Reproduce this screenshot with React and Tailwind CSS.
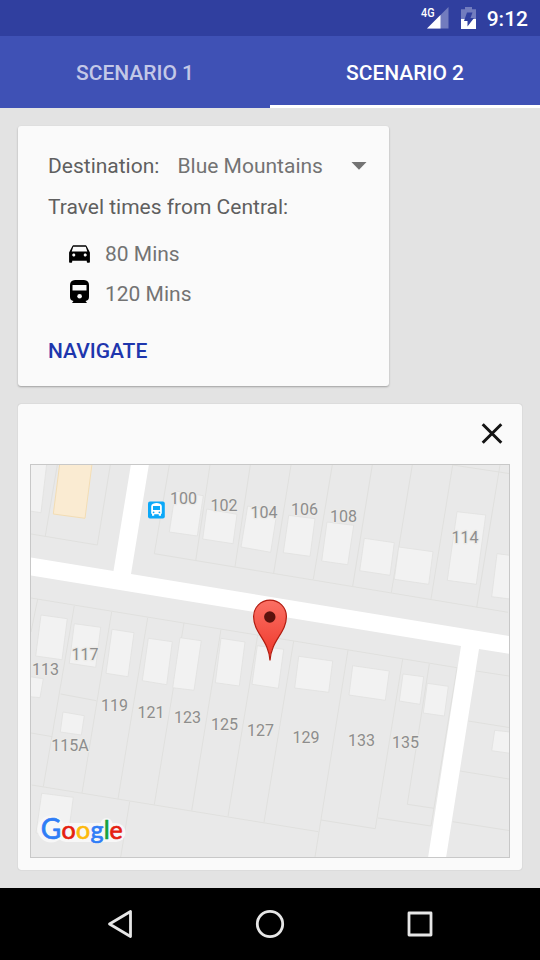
const PARCELS = [
  "M57.3 465 45.3 536M31 534 97.3 545 110.3 465M169.3 465 154.3 553.7 508 612.3",
  "M210 465 195.7 560.7M250.3 465 235 566.7M291 465 273.7 573M332.3 465 313.3 579.3M372.3 465 352.7 586M412.3 465 391.3 592.7M452.7 465 431 599M500 465 476.7 607.3M452.7 465 509 473.5",
  "M31 598 457 667.7 431 826 378 818M37.7 599 31 632M74.3 605.7 43.3 786.7M111.7 611.7 82 793M147.7 617.7 118 799M184 622.7 154.3 804.7M221 629.3 191.7 810.7M257.7 635 228 816.3M293.7 641 264 822.3M348 650 315 857M402.7 659 375.3 828.7 321 820",
  "M429.3 664 407.3 804.3 434 808.3M31.7 785 318.3 831.7M129.7 801.7 120.7 857M60.7 694 96.3 700.7M31 733 52.3 736.7",
  "M476 671 509 676M468.3 721 509 727.5M460 771 509 779M452.7 821.7 509 830.5",
];

const BUILDINGS = [
  "30,464 46.7,464 41,512.7 30,511",
  "175.5,491 203.3,495.7 197.3,536 169.3,532",
  "206.7,509 237,514.3 233,543.7 202.7,539",
  "247.7,506 277,511.7 270.7,552.3 241,547",
  "288.7,515.3 315,518.7 310,556.3 283.3,552.7",
  "327,522 353.7,525.3 347.7,564.7 321.7,561",
  "364.3,538.3 394.3,542.7 390,575.3 359.7,570.7",
  "398.7,547 433,551.7 428.7,584.3 394.3,579.3",
  "457,511.7 485.7,515 476.3,584.3 447.3,580.3",
  "497,553.7 510,555.3 510,599 491.7,596.7",
  "41,615 67.3,618.7 62,659.7 35.7,656",
  "74.3,623.7 100.7,627.3 95.7,667.3 69.3,663.3",
  "112,629.3 134,632.7 128,676.7 106,673.3",
  "148.3,638.3 172.3,641.7 166.7,684.7 142.3,680.7",
  "180,637.7 201.3,640.7 194,690.3 172.7,687.7",
  "63,712 84.3,715.7 81.3,735 60.3,732",
  "30,676.7 43.3,678.7 40,697.7 30,696.7",
  "221,638.3 245,642 239.3,686 215.3,682.7",
  "257.3,645.7 283.7,649.3 278.3,688.3 252,684.3",
  "298.7,656.3 332.7,661 328.7,692.3 294.7,688",
  "352.7,665.7 389.3,671 385.3,700.3 349,695",
  "403,674 423.7,676.7 420,704.3 399.3,701",
  "427.3,683.3 448.3,686.3 444.3,716 423.3,713",
  "494.7,730.3 510,732 510,753.3 491.7,750.7",
  "41.7,793.3 73.3,797.3 68,837 36,833",
];

const LABELS = [
  ["100", 183.5, 504],
  ["102", 224, 511],
  ["104", 264, 518],
  ["106", 304.5, 515],
  ["108", 343.5, 521.5],
  ["114", 465, 542.5],
  ["117", 85, 659.5],
  ["113", 45.5, 674.6],
  ["119", 114.5, 711.3],
  ["121", 151, 717.6],
  ["123", 187.5, 723.3],
  ["125", 224.5, 729.6],
  ["127", 260.5, 735.6],
  ["129", 306, 742.5],
  ["133", 361.5, 746.2],
  ["135", 405.5, 747.6],
  ["115A", 70, 751.2],
];

const BRAND = [
  { char: "G", x: 40.8, size: 28, color: "#2f7df6" },
  { char: "o", x: 61.6, size: 25, color: "#e5200e" },
  { char: "o", x: 75.9, size: 25, color: "#fdb90b" },
  { char: "g", x: 90.6, size: 25, color: "#2f7df6" },
  { char: "l", x: 103.8, size: 25, color: "#15a23d" },
  { char: "e", x: 109.6, size: 25, color: "#e5200e" },
];

function StatusBar() {
  return (
    <div className="flex h-9 items-center justify-end bg-[#303f9f] pr-3 text-white">
      <svg width="30" height="26" viewBox="420 5 30 26" className="mr-[11px]">
        <path d="M449.500 7V28.500H428z" fill="#fff" fillOpacity="0.32" />
        <path d="M441.500 15V28.500H428z" fill="#fff" />
        <text x="422" y="16.800" fontSize="12.500" fontWeight="500" fill="#fff" textLength="13.5" lengthAdjust="spacingAndGlyphs">4G</text>
      </svg>
      <svg width="16" height="24" viewBox="460 6 16 24" className="mr-[11px]">
        <path d="M465 7h7v2.200h4V19h-15V9.200h4z" fill="#fff" fillOpacity="0.32" />
        <path d="M461 19h15v10h-15z" fill="#fff" />
        <path d="M467 12.500h5.500l-2 5.500h3.500l-6.500 8.500v-5.500h-3.500z" fill="#303f9f" />
      </svg>
      <span className="pt-[1px] text-[21px] font-medium leading-9">9:12</span>
    </div>
  );
}

function Tabs() {
  return (
    <div className="flex h-[72px] bg-[#3f51b5] text-[21px] font-medium">
      <div className="flex flex-1 items-center justify-center pt-[4px] text-white/70">
        <span>SCENARIO 1</span>
      </div>
      <div className="flex flex-1 items-center justify-center border-b-[3px] border-white pt-[7px] text-white">
        <span>SCENARIO 2</span>
      </div>
    </div>
  );
}

function TripCard() {
  return (
    <div className="h-[260px] w-[371px] rounded-[3px] bg-[#fafafa] pl-[30px] text-[21px] text-[#737373] shadow-[0_1px_2px_rgba(0,0,0,0.3)]">
      <div className="flex h-[61px] items-end">
        <span className="w-[129.500px] text-[#5f5f5f] leading-[42px]">Destination:</span>
        <span className="w-[173px] leading-[42px]">Blue Mountains</span>
        <svg width="16" height="42" viewBox="0 0 16 42">
          <path d="M.5 17h15L8 24.800z" fill="#737373" />
        </svg>
      </div>
      <div className="h-[47px] leading-[41px] text-[#5f5f5f]">Travel times from Central:</div>
      <div className="flex h-10 items-center pl-[19px]">
        <svg width="25" height="25" viewBox="0 1 24 24" fill="#000">
          <path d="M18.920 5.010C18.720 4.420 18.160 4 17.500 4h-11c-.66 0-1.210.42-1.420 1.010L2 11v9c0 .55.45 1 1 1h1c.55 0 1-.45 1-1v-1h14v1c0 .55.45 1 1 1h1c.55 0 1-.45 1-1v-9l-3.080-5.990zM6.500 15c-.83 0-1.500-.67-1.500-1.500S5.670 12 6.500 12s1.500.67 1.500 1.500S7.330 15 6.500 15zm11 0c-.83 0-1.500-.67-1.500-1.500s.67-1.500 1.500-1.500 1.500.67 1.500 1.500-.67 1.500-1.500 1.500zM4.500 10l1.500-4.500h12L19.500 10h-15z" />
        </svg>
        <span className="ml-[13px] pt-[2px]">80 Mins</span>
      </div>
      <div className="flex h-10 items-center pl-[19px]">
        <svg width="25" height="28" viewBox="67 280 25 28">
          <path d="M75 280h9q5 .5 5 5v12q0 3.500-3.500 4l1.500 2H72l1.500-2q-3.500-.5-3.500-4v-12q0-4.500 5-5z" fill="#000" />
          <path d="M72.500 285h14v5.500h-14z" fill="#fafafa" />
          <circle cx="79.600" cy="296.300" r="2.300" fill="#fafafa" />
        </svg>
        <span className="ml-[13px] pt-[2px]">120 Mins</span>
      </div>
      <button className="mt-[15px] block leading-[44px] font-medium text-[#1e36ad]">NAVIGATE</button>
    </div>
  );
}

function BrandMark() {
  return (
    <g className="font-[Lato,sans-serif]" strokeLinejoin="round">
      <g stroke="#f7f7f7" strokeWidth="6" aria-hidden="true">
        <path d="M51 829h.1" strokeWidth="27" strokeLinecap="round" />
        <path d="M66 832.500h50" strokeWidth="19" strokeLinecap="round" />
        <path d="M97 838v0M106.500 824v0" strokeWidth="12" strokeLinecap="round" />
      </g>
      <text y="839">
        {BRAND.map(({ char, x, size, color }) => (
          <tspan key={x} x={x} fontSize={size} fill={color} stroke={color} strokeWidth="0.7">
            {char}
          </tspan>
        ))}
      </text>
    </g>
  );
}

function StreetMap() {
  return (
    <svg viewBox="31 465 478 392" className="block h-full w-full">
      <defs>
        <linearGradient id="pin" x1="0" y1="0" x2="0" y2="1">
          <stop offset="0" stopColor="#fb7064" />
          <stop offset="1" stopColor="#ee3528" />
        </linearGradient>
      </defs>
      <path d="M31 465h478v392H31z" fill="#e9e9e9" />
      <g fill="none" stroke="#e0e0de" strokeWidth="1">
        {PARCELS.map((d) => (
          <path key={d} d={d} />
        ))}
      </g>
      <path d="M131 464h18L131 574 510 636.200V653.800L479 649 446 858H428L461 646 30 575.300V557.300L113.500 571z" fill="#fff" />
      <g fill="#f2f2f2" stroke="#e1e1e0" strokeWidth="0.8">
        {BUILDINGS.map((points) => (
          <polygon key={points} points={points} />
        ))}
      </g>
      <polygon points="59.7,464 92,464 85,518.3 53.300,514" fill="#faebd2" stroke="#f3ddb4" strokeWidth="1" />
      <g transform="translate(148 501.500)">
        <rect width="16.800" height="17" rx="2" fill="#0ba8f8" />
        <path d="M5 2.200Q8.500 1 12 2.200q1.800.5 1.800 2.500v7.600h-.8v2h-2.200v-1.600H6.200v1.600H4v-2h-.8V4.700q0-2 1.800-2.500z" fill="#fff" />
        <path d="M5 4.500h7v4H5z" fill="#0ba8f8" />
        <circle cx="5.600" cy="10.800" r=".9" fill="#0ba8f8" />
        <circle cx="11.400" cy="10.800" r=".9" fill="#0ba8f8" />
      </g>
      <g fontSize="16" textAnchor="middle" fill="#8d8d8d" stroke="#ecebe8" strokeWidth="2.500" strokeLinejoin="round" paintOrder="stroke">
        {LABELS.map(([label, x, y]) => (
          <text key={label} x={x} y={y}>
            {label}
          </text>
        ))}
      </g>
      <path d="M270 660.500C268.800 640 253.600 633 253.600 616.500A16.400 16.400 0 0 1 286.400 616.500C286.400 633 271.200 640 270 660.500z" fill="url(#pin)" stroke="#b11c10" strokeWidth="1.200" />
      <circle cx="269.800" cy="617" r="5.700" fill="#5b120d" />
      <BrandMark />
    </svg>
  );
}

function MapCard() {
  return (
    <div className="flex h-[466px] flex-col rounded-[3px] bg-[#fafafa] px-3 pb-3 shadow-[0_0_1px_rgba(0,0,0,0.3)]">
      <div className="flex h-[60px] items-center justify-end pr-[7px]">
        <svg width="22" height="22" viewBox="0 0 22 22">
          <path d="M1.700 1.200l18.600 18.600M20.300 1.200L1.700 19.800" stroke="#141414" strokeWidth="3" />
        </svg>
      </div>
      <div className="h-[394px] w-[480px] border border-[#c8c8c8]">
        <StreetMap />
      </div>
    </div>
  );
}

function NavBar() {
  return (
    <div className="flex h-[72px] items-center justify-center gap-[120px] bg-black">
      <svg width="30" height="30" viewBox="0 0 30 30" fill="none" stroke="#e6e6e6" strokeWidth="2.800" strokeLinejoin="round">
        <path d="M25.500 2.500v25L4.500 15z" />
      </svg>
      <svg width="30" height="30" viewBox="0 0 30 30" fill="none" stroke="#e6e6e6" strokeWidth="2.800">
        <circle cx="15" cy="15" r="12.700" />
      </svg>
      <svg width="30" height="30" viewBox="0 0 30 30" fill="none" stroke="#e6e6e6" strokeWidth="2.800" strokeLinejoin="round">
        <path d="M4 4h22v22H4z" />
      </svg>
    </div>
  );
}

export default function App() {
  return (
    <div className="flex h-[960px] w-[540px] flex-col overflow-hidden bg-[#e3e3e3] font-[Roboto,sans-serif]">
      <StatusBar />
      <Tabs />
      <main className="flex flex-1 flex-col gap-[18px] px-[18px] pt-[18px]">
        <TripCard />
        <MapCard />
      </main>
      <NavBar />
    </div>
  );
}
